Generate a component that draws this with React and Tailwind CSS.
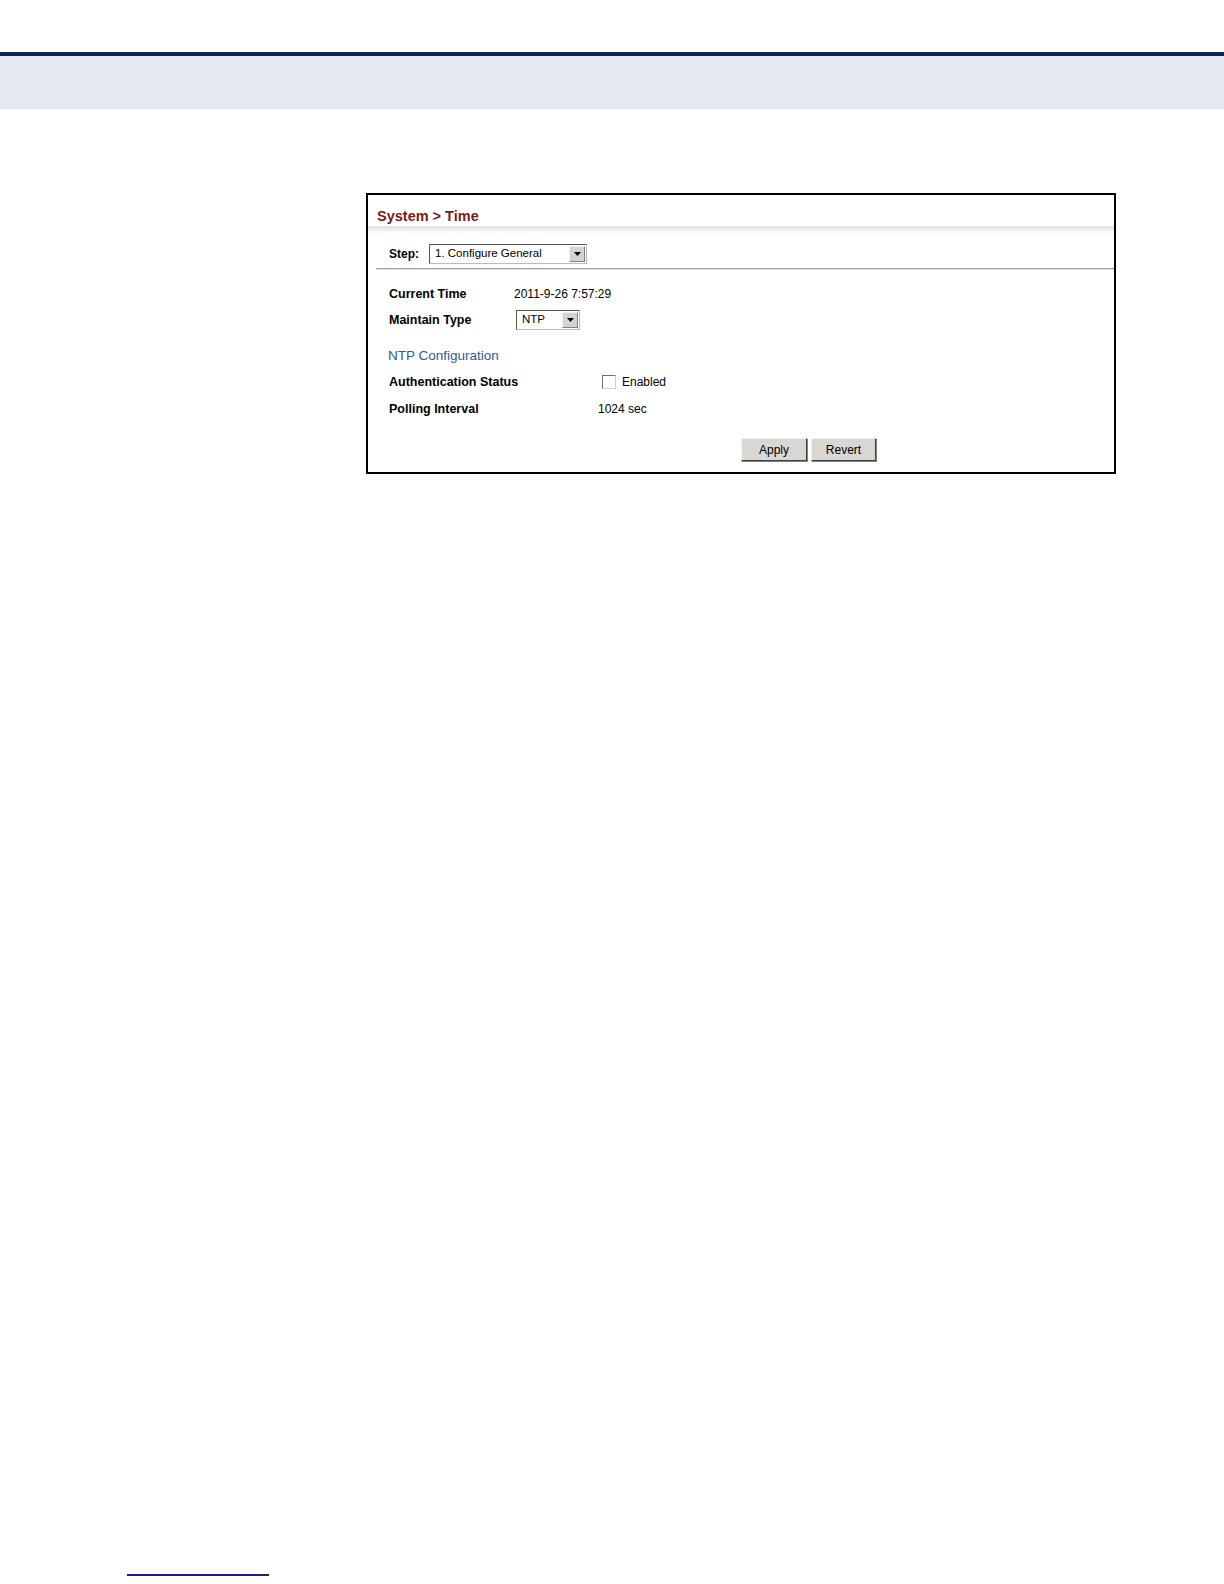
import React from "react";

function Arrow() {
  return (
    <span className="flex h-full w-[16px] items-center justify-center border border-l-[#f4f4f4] border-t-[#f4f4f4] border-r-[#808080] border-b-[#808080] bg-[#d6d3ce]">
      <svg width="7" height="4" viewBox="0 0 7 4">
        <path d="M0 0h7L3.5 4z" fill="#000" />
      </svg>
    </span>
  );
}

function Select({ value, width }) {
  return (
    <div
      className={`flex h-[20px] items-center bg-white border border-t-[#555] border-l-[#555] border-b-[#bbb] border-r-[#bbb] ${width} p-[1px]`}
    >
      <span className="flex-1 pl-[4px] text-[11.5px] leading-none text-black">{value}</span>
      <Arrow />
    </div>
  );
}

function Button({ children, width }) {
  return (
    <button
      className={`h-[23px] ${width} bg-[#d8d7d3] border border-t-[#f2f2f2] border-l-[#f2f2f2] border-r-[#404040] border-b-[#404040] shadow-[1px_1px_0_#808080] text-[12px] text-black`}
    >
      {children}
    </button>
  );
}

export default function App() {
  return (
    <div className="relative h-[1584px] w-[1224px] bg-white font-['Liberation_Sans',Arial,sans-serif]">
      {/* header band */}
      <div className="pt-[52px]">
        <div className="h-[4px] bg-[#0b2462]" />
        <div className="h-[53px] bg-[#e5e8f0]" />
      </div>

      {/* panel */}
      <div className="ml-[366px] mt-[84px] h-[281px] w-[750px] border-2 border-black bg-white">
        <div className="h-[31px] pl-[9px] pt-[13px] text-[14.5px] font-bold leading-[16px] text-[#7a1b1b]">
          System &gt; Time
        </div>
        <div className="h-[8px] bg-gradient-to-b from-[#e2e2e2] to-white" />

        <div className="mt-[10px] flex items-center pl-[21px]">
          <span className="w-[40px] text-[12px] font-bold text-black">Step:</span>
          <Select value="1. Configure General" width="w-[158px]" />
        </div>
        <div className="ml-[8px] mt-[4px] h-[1px] bg-[#9a9a9a]" />
        <div className="ml-[8px] h-[1px] bg-[#e6e6e6]" />

        <div className="pl-[21px]">
          <div className="mt-[14px] flex h-[20px] items-center text-[12px]">
            <span className="w-[125px] text-[12.5px] font-bold">Current Time</span>
            <span>2011-9-26 7:57:29</span>
          </div>
          <div className="mt-[6px] flex h-[20px] items-center text-[12px]">
            <span className="w-[127px] text-[12.5px] font-bold">Maintain Type</span>
            <Select value="NTP" width="w-[64px]" />
          </div>
          <div className="mt-[16px] flex h-[20px] items-center text-[13.5px] text-[#2c5aa0]">
            <span className="-ml-[1px]">NTP Configuration</span>
          </div>
          <div className="mt-[6px] flex h-[20px] items-center text-[12px]">
            <span className="w-[213px] text-[12.5px] font-bold">Authentication Status</span>
            <span className="h-[14px] w-[14px] border border-t-[#707070] border-l-[#707070] border-r-[#d0d0d0] border-b-[#d0d0d0] bg-white" />
            <span className="ml-[6px]">Enabled</span>
          </div>
          <div className="mt-[7px] flex h-[20px] items-center text-[12px]">
            <span className="w-[209px] text-[12.5px] font-bold">Polling Interval</span>
            <span>1024 sec</span>
          </div>
        </div>

        <div className="mt-[19px] flex gap-[4px] pl-[373px]">
          <Button width="w-[66px]">Apply</Button>
          <Button width="w-[65px]">Revert</Button>
        </div>
      </div>

      {/* footer rule */}
      <div className="absolute left-[127px] top-[1574px] h-[2px] w-[142px] bg-[#1c1f8c]" />
    </div>
  );
}
